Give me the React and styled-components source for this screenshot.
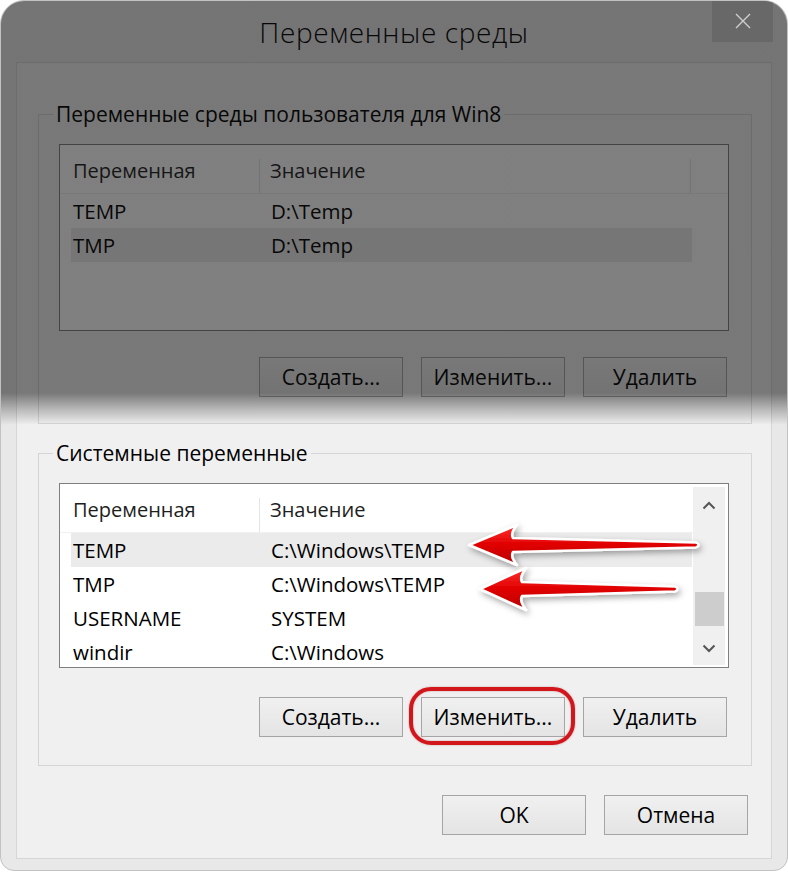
import React from "react";
import styled, { createGlobalStyle } from "styled-components";

const Global = createGlobalStyle`
  html, body { margin: 0; padding: 0; background: #ffffff; }
  body { font-family: "Open Sans", "Noto Sans", "DejaVu Sans", sans-serif; }
  * { box-sizing: border-box; }
`;

const Page = styled.div`
  width: 788px;
  height: 874px;
  background: #ffffff;
`;

const Window = styled.div`
  position: relative;
  width: 788px;
  height: 871px;
  background: #e8e8e8;
  border: 1px solid #c2c2c2;
  border-radius: 24px 24px 14px 14px;
  overflow: hidden;
  display: flex;
  flex-direction: column;
`;

const Shade = styled.div`
  position: absolute;
  left: 0;
  right: 0;
  top: 0;
  height: 424px;
  z-index: 5;
  pointer-events: none;
  background: linear-gradient(
    to bottom,
    rgba(14, 14, 14, 0.53) 0px,
    rgba(14, 14, 14, 0.53) 392px,
    rgba(14, 14, 14, 0.25) 408px,
    rgba(14, 14, 14, 0) 424px
  );
`;

const TitleBar = styled.div`
  height: 61px;
  display: grid;
  grid-template-columns: 1fr auto 1fr;
  align-items: start;
`;

const Title = styled.div`
  grid-column: 2;
  padding-top: 14px;
  font-size: 28px;
  font-weight: 300;
  letter-spacing: 0.6px;
  line-height: 34px;
  color: #000;
`;

const CloseButton = styled.div`
  grid-column: 3;
  justify-self: end;
  position: relative;
  z-index: 6;
  margin-top: -1px;
  margin-right: 14px;
  width: 61px;
  height: 42px;
  background: #686868;
  display: flex;
  align-items: center;
  justify-content: center;
`;

const Client = styled.div`
  margin: 0 15px;
  height: 797px;
  background: #f0f0f0;
  border: 1px solid #d6d6d6;
  padding: 40px 19px 24px 21px;
  display: flex;
  flex-direction: column;
`;

const Group = styled.fieldset`
  margin: 0 0 ${(p) => p.$after}px 0;
  min-width: 0;
  border: 1px solid #d5d5d5;
  padding: 19px 22px ${(p) => p.$bottom}px 20px;
`;

const Legend = styled.legend`
  margin-left: -6px;
  padding: 0 3px;
  font-size: 21px;
  line-height: 22px;
  color: #000;
`;

const Listbox = styled.div`
  position: relative;
  height: ${(p) => p.$height}px;
  background: #ffffff;
  border: 1px solid #7f7f7f;
  display: flex;
  overflow: hidden;
`;

const ListContent = styled.div`
  flex: 1;
  display: flex;
  flex-direction: column;
`;

const Header = styled.div`
  display: grid;
  grid-template-columns: 199px 431px 1fr;
  height: 49px;
  border-bottom: 1px solid #f0f0f0;
  flex-shrink: 0;
`;

const HeaderCell = styled.div`
  position: relative;
  display: flex;
  align-items: center;
  padding: 3px 0 0 ${(p) => p.$pad}px;
  font-size: 20px;
  color: #1e1e1e;
  &::before {
    content: "";
    display: ${(p) => (p.$sep ? "block" : "none")};
    position: absolute;
    left: 0;
    top: 14px;
    bottom: 0;
    width: 1px;
    background: #e4e4e4;
  }
`;

const Row = styled.div`
  display: grid;
  grid-template-columns: 188px 1fr;
  margin-left: 11px;
  width: 621px;
  height: 34px;
  flex-shrink: 0;
  align-items: center;
  background: ${(p) => (p.$selected ? "#ebebeb" : "transparent")};
  font-size: 20.5px;
  color: #000;
`;

const Cell = styled.div`
  padding-left: ${(p) => p.$pad}px;
  white-space: nowrap;
`;

const Scrollbar = styled.div`
  width: 32px;
  margin: 3px 3px 2px 0;
  background: #f0f0f0;
  display: flex;
  flex-direction: column;
`;

const ScrollArrow = styled.div`
  height: ${(p) => p.$h}px;
  display: flex;
  align-items: center;
  justify-content: center;
  flex-shrink: 0;
`;

const Track = styled.div`
  flex: 1;
`;

const Thumb = styled.div`
  height: 34px;
  margin: ${(p) => p.$offset}px 1px 0 2px;
  background: #cdcdcd;
`;

const ButtonRow = styled.div`
  display: flex;
  justify-content: flex-end;
  gap: 18px;
  margin-top: ${(p) => p.$top}px;
  margin-right: ${(p) => p.$right}px;
`;

const Button = styled.button`
  position: relative;
  width: 144px;
  height: 40px;
  padding: 0;
  margin: 0;
  font-family: inherit;
  font-size: 21px;
  color: #000;
  background: linear-gradient(to bottom, #f0f0f0, #e4e4e4);
  border: 1px solid #a5a5a5;
  border-radius: 0;
  &::after {
    content: "";
    display: ${(p) => (p.$circled ? "block" : "none")};
    position: absolute;
    left: -13px;
    right: -11px;
    top: -11px;
    bottom: -9px;
    border: 4px solid #d3151c;
    border-radius: 22px;
    box-shadow: 0 0 2px rgba(120, 0, 0, 0.35), inset 0 0 2px rgba(120, 0, 0, 0.35);
  }
`;

const ArrowLayer = styled.svg`
  position: absolute;
  left: 0;
  top: 0;
  width: 100%;
  height: 100%;
  z-index: 2;
  overflow: visible;
  pointer-events: none;
`;

const Chevron = ({ down }) => (
  <svg width="14" height="9" viewBox="0 0 14 9">
    <polyline
      points={down ? "1.5,1.5 7,7 12.5,1.5" : "1.5,7.5 7,2 12.5,7.5"}
      fill="none"
      stroke="#555"
      strokeWidth="2"
    />
  </svg>
);

const CloseIcon = () => (
  <svg width="16" height="16" viewBox="0 0 16 16">
    <path d="M1 1 L15 15 M15 1 L1 15" stroke="#cfcfcf" strokeWidth="1.4" />
  </svg>
);

const Arrows = () => (
  <ArrowLayer>
    <defs>
      <linearGradient id="redfill" x1="0" y1="0" x2="0" y2="1">
        <stop offset="0" stopColor="#ff3030" />
        <stop offset="0.5" stopColor="#e00000" />
        <stop offset="1" stopColor="#b80000" />
      </linearGradient>
      <filter id="shadow" x="-20%" y="-50%" width="140%" height="200%">
        <feDropShadow dx="2" dy="3" stdDeviation="3" floodColor="#000" floodOpacity="0.35" />
      </filter>
    </defs>
    <path
      d="M409,61 L457,41 Q450,49 453,54 L636,58.5 Q641,61 636,63.5 L453,68 Q450,73 457,81 Z"
      fill="url(#redfill)"
      stroke="#fff"
      strokeWidth="2.5"
      strokeLinejoin="round"
      filter="url(#shadow)"
    />
    <path
      d="M420,105 L466,84 Q459,93 462,98 L615,102.5 Q620,105 615,107.5 L462,112 Q459,117 466,126 Z"
      fill="url(#redfill)"
      stroke="#fff"
      strokeWidth="2.5"
      strokeLinejoin="round"
      filter="url(#shadow)"
    />
  </ArrowLayer>
);

const VarList = ({ rows, selected, height, scroll }) => (
  <Listbox $height={height}>
    <ListContent>
      <Header>
        <HeaderCell $pad={13}>Переменная</HeaderCell>
        <HeaderCell $pad={11} $sep>Значение</HeaderCell>
        <HeaderCell $pad={0} $sep={!scroll} />
      </Header>
      {rows.map(([name, value], i) => (
        <Row key={name} $selected={i === selected}>
          <Cell $pad={2}>{name}</Cell>
          <Cell $pad={12}>{value}</Cell>
        </Row>
      ))}
    </ListContent>
    {scroll && (
      <Scrollbar>
        <ScrollArrow $h={36}>
          <Chevron />
        </ScrollArrow>
        <Track>
          <Thumb $offset={69} />
        </Track>
        <ScrollArrow $h={34}>
          <Chevron down />
        </ScrollArrow>
      </Scrollbar>
    )}
    {scroll && <Arrows />}
  </Listbox>
);

const userRows = [
  ["TEMP", "D:\\Temp"],
  ["TMP", "D:\\Temp"],
];

const sysRows = [
  ["TEMP", "C:\\Windows\\TEMP"],
  ["TMP", "C:\\Windows\\TEMP"],
  ["USERNAME", "SYSTEM"],
  ["windir", "C:\\Windows"],
];

export default function App() {
  return (
    <Page>
      <Global />
      <Window>
        <TitleBar>
          <Title>Переменные среды</Title>
          <CloseButton>
            <CloseIcon />
          </CloseButton>
        </TitleBar>
        <Client>
          <Group $bottom={26} $after={18}>
            <Legend>Переменные среды пользователя для Win8</Legend>
            <VarList rows={userRows} selected={1} height={187} />
            <ButtonRow $top={26} $right={2}>
              <Button>Создать...</Button>
              <Button>Изменить...</Button>
              <Button>Удалить</Button>
            </ButtonRow>
          </Group>
          <Group $bottom={28} $after={0}>
            <Legend>Системные переменные</Legend>
            <VarList rows={sysRows} selected={0} height={185} scroll />
            <ButtonRow $top={29} $right={2}>
              <Button>Создать...</Button>
              <Button $circled>Изменить...</Button>
              <Button>Удалить</Button>
            </ButtonRow>
          </Group>
          <ButtonRow $top={29} $right={4}>
            <Button>OK</Button>
            <Button>Отмена</Button>
          </ButtonRow>
        </Client>
        <Shade />
      </Window>
    </Page>
  );
}
